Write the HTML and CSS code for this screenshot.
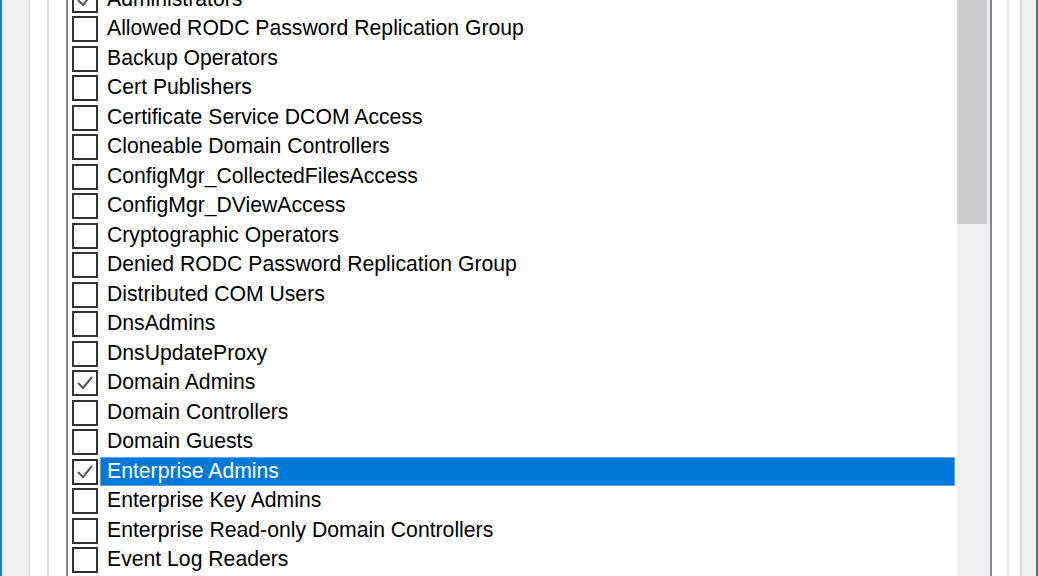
FILE: index.html
```html
<!DOCTYPE html>
<html>
<head>
<meta charset="utf-8">
<link rel="stylesheet" href="styles.css">
</head>
<body>
<div class="window">
  <div class="tabpage">
    <div class="group">
      <div class="listbox">
        <div class="items">
          <div class="row first"><span class="cb checked"><svg viewBox="0 0 22 22"><polyline points="4,11 9,16 18,5"/></svg></span><span class="label">Administrators</span></div>
          <div class="row"><span class="cb"></span><span class="label">Allowed RODC Password Replication Group</span></div>
          <div class="row"><span class="cb"></span><span class="label">Backup Operators</span></div>
          <div class="row"><span class="cb"></span><span class="label">Cert Publishers</span></div>
          <div class="row"><span class="cb"></span><span class="label">Certificate Service DCOM Access</span></div>
          <div class="row"><span class="cb"></span><span class="label">Cloneable Domain Controllers</span></div>
          <div class="row"><span class="cb"></span><span class="label">ConfigMgr_CollectedFilesAccess</span></div>
          <div class="row"><span class="cb"></span><span class="label">ConfigMgr_DViewAccess</span></div>
          <div class="row"><span class="cb"></span><span class="label">Cryptographic Operators</span></div>
          <div class="row"><span class="cb"></span><span class="label">Denied RODC Password Replication Group</span></div>
          <div class="row"><span class="cb"></span><span class="label">Distributed COM Users</span></div>
          <div class="row"><span class="cb"></span><span class="label">DnsAdmins</span></div>
          <div class="row"><span class="cb"></span><span class="label">DnsUpdateProxy</span></div>
          <div class="row"><span class="cb checked"><svg viewBox="0 0 22 22"><polyline points="4,11 9,16 18,5"/></svg></span><span class="label">Domain Admins</span></div>
          <div class="row"><span class="cb"></span><span class="label">Domain Controllers</span></div>
          <div class="row"><span class="cb"></span><span class="label">Domain Guests</span></div>
          <div class="row selected"><span class="cb checked"><svg viewBox="0 0 22 22"><polyline points="4,11 9,16 18,5"/></svg></span><span class="label">Enterprise Admins</span></div>
          <div class="row"><span class="cb"></span><span class="label">Enterprise Key Admins</span></div>
          <div class="row"><span class="cb"></span><span class="label">Enterprise Read-only Domain Controllers</span></div>
          <div class="row"><span class="cb"></span><span class="label">Event Log Readers</span></div>
        </div>
        <div class="scrollbar"><div class="thumb"></div></div>
      </div>
    </div>
  </div>
</div>
</body>
</html>
```

FILE: styles.css
```css
html, body {
  margin: 0;
  padding: 0;
}
body {
  width: 1038px;
  height: 576px;
  overflow: hidden;
  background: #f0f0f0;
  font-family: "Liberation Sans", Arial, sans-serif;
}
.window {
  box-sizing: border-box;
  height: 576px;
  border-left: 2px solid #1a7fd6;
  border-right: 2px solid #1a7fd6;
  background: #f0f0f0;
  padding: 0 14px 0 27px;
  display: flex;
}
.tabpage {
  flex: 1;
  display: flex;
  background: #ffffff;
  border-left: 1px solid #dadada;
  border-right: 2px solid #dcdcdc;
  padding: 0 11px 0 17px;
}
.group {
  flex: 1;
  display: flex;
  background: #ffffff;
  border-left: 2px solid #dcdcdc;
  border-right: 2px solid #e3e3e3;
  padding: 0 15px 0 17px;
}
.listbox {
  flex: 1;
  display: flex;
  background: #ffffff;
  border-left: 2px solid #82868f;
  border-right: 2px solid #82868f;
  overflow: hidden;
}
.items {
  flex: 1;
  display: flex;
  flex-direction: column;
  padding-left: 4px;
  min-width: 0;
}
.row {
  height: 29.5px;
  flex: 0 0 29.5px;
  display: flex;
  align-items: center;
}
.row.first {
  margin-top: -15px;
}
.cb {
  box-sizing: border-box;
  width: 26px;
  height: 26px;
  flex: 0 0 26px;
  border: 2px solid #333333;
  background: #ffffff;
  display: flex;
  align-items: center;
  justify-content: center;
}
.cb svg {
  width: 22px;
  height: 22px;
}
.cb polyline {
  fill: none;
  stroke: #555555;
  stroke-width: 2;
}
.label {
  box-sizing: border-box;
  flex: 1;
  height: 29px;
  margin-left: 2px;
  margin-right: 2px;
  padding-left: 7px;
  padding-bottom: 2px;
  display: flex;
  align-items: center;
  font-size: 21.2px;
  letter-spacing: 0;
  color: #000000;
  white-space: nowrap;
}
.selected .label {
  background: #0078d7;
  color: #ffffff;
  box-shadow: inset 0 0 0 1px #5aa6e6;
}
.scrollbar {
  width: 33px;
  flex: 0 0 33px;
  background: #f0f0f0;
}
.thumb {
  height: 224px;
  margin: 0 3px 0 0;
  background: #cdcdcd;
}
```
